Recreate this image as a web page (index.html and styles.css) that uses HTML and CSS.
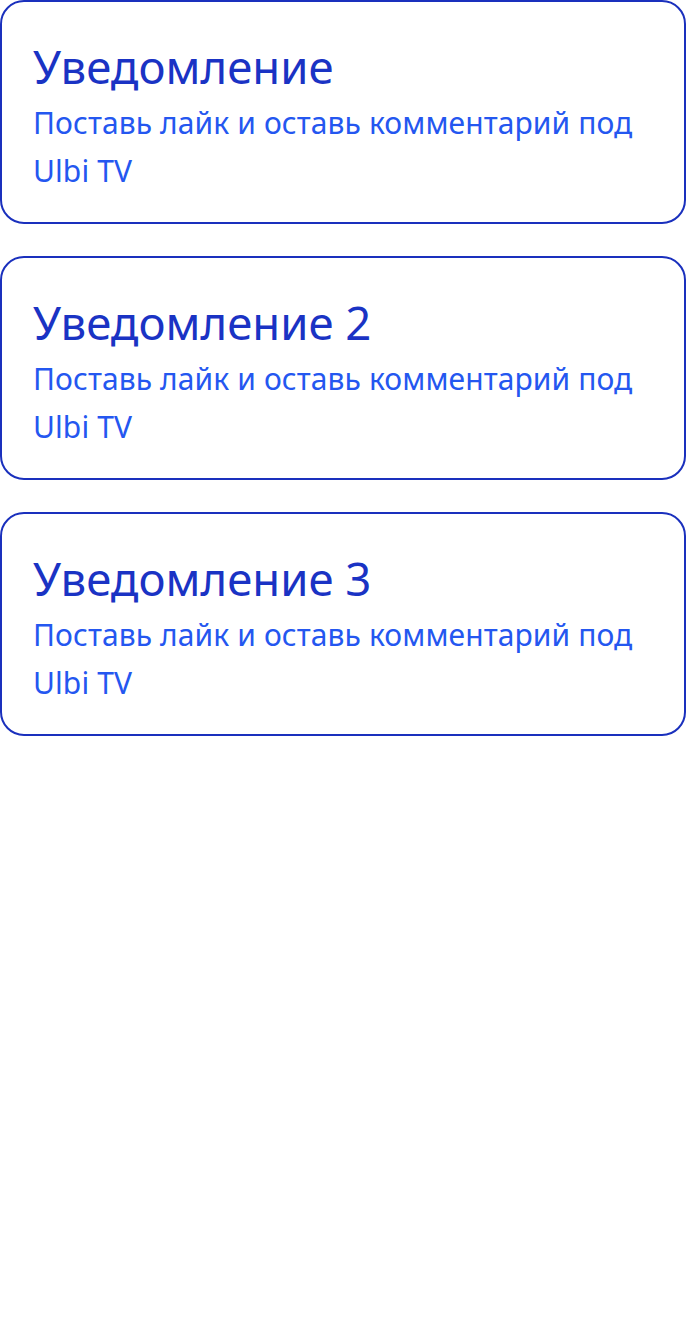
FILE: index.html
```html
<!DOCTYPE html>
<html lang="ru">
<head>
<meta charset="utf-8">
<title>Уведомления</title>
<link rel="stylesheet" href="styles.css">
</head>
<body>
<main class="list">
  <section class="card">
    <h2 class="card-title">Уведомление</h2>
    <p class="card-text">Поставь лайк и оставь комментарий под Ulbi TV</p>
  </section>
  <section class="card">
    <h2 class="card-title">Уведомление 2</h2>
    <p class="card-text">Поставь лайк и оставь комментарий под Ulbi TV</p>
  </section>
  <section class="card">
    <h2 class="card-title">Уведомление 3</h2>
    <p class="card-text">Поставь лайк и оставь комментарий под Ulbi TV</p>
  </section>
</main>
</body>
</html>
```

FILE: styles.css
```css
html, body {
  margin: 0;
  padding: 0;
  background: #ffffff;
}

body {
  font-family: "Noto Sans", "Open Sans", sans-serif;
}

.list {
  display: flex;
  flex-direction: column;
  gap: 32px;
}

.card {
  border: 2px solid #1a30bd;
  border-radius: 24px;
  padding: 36px 30px 26px 31px;
  height: 224px;
  box-sizing: border-box;
}

.card-title {
  margin: 0;
  font-size: 45.5px;
  line-height: 56px;
  font-weight: 400;
  color: #1a33c4;
}

.card-text {
  margin: 5px 0 0;
  font-size: 30px;
  line-height: 48px;
  letter-spacing: 0.1px;
  color: #2457f0;
  max-width: 612px;
}
```
